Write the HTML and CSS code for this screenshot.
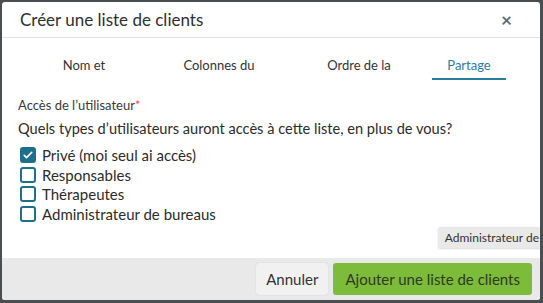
FILE: index.html
```html
<!DOCTYPE html>
<html lang="fr">
<head>
  <meta charset="UTF-8">
  <title>Créer une liste de clients</title>
  <link rel="stylesheet" href="styles.css">
</head>
<body>
  <div class="modal">
    <div class="modal-header">
      <h2>Créer une liste de clients</h2>
      <span class="close">&times;</span>
    </div>

    <div class="tabs">
      <div class="tab">Nom et</div>
      <div class="tab">Colonnes du</div>
      <div class="tab">Ordre de la</div>
      <div class="tab active">Partage</div>
    </div>

    <div class="modal-body">
      <p class="label">Accès de l’utilisateur<span class="req">*</span></p>
      <p class="question">Quels types d’utilisateurs auront accès à cette liste, en plus de vous?</p>

      <div class="options">
        <label class="option"><span class="box checked">
          <svg viewBox="0 0 16 16" width="12" height="12"><path d="M3 8.5l3 3 7-7" fill="none" stroke="#fff" stroke-width="2.2" stroke-linecap="round" stroke-linejoin="round"/></svg>
        </span>Privé (moi seul ai accès)</label>
        <label class="option"><span class="box"></span>Responsables</label>
        <label class="option"><span class="box"></span>Thérapeutes</label>
        <label class="option"><span class="box"></span>Administrateur de bureaus</label>
      </div>

      <!-- infobulle du survol -->
      <div class="tooltip">Administrateur de</div>
    </div>

    <div class="modal-footer">
      <button class="btn btn-cancel">Annuler</button>
      <button class="btn btn-primary">Ajouter une liste de clients</button>
    </div>
  </div>
</body>
</html>
```

FILE: styles.css
```css
html, body {
  height: 100%;
  margin: 0;
  overflow: hidden;
}

body {
  background: #4b4e51;
  font-family: Lato, 'Noto Sans', sans-serif;
  color: #333;
  padding: 2px 3px 3px 2px;
  box-sizing: border-box;
}

.modal {
  background: #fff;
  border-radius: 3px;
  height: 298px;
  display: flex;
  flex-direction: column;
  overflow: hidden;
}

.modal-header {
  display: flex;
  align-items: center;
  justify-content: space-between;
  height: 35px;
  padding: 0 28px 0 18px;
  border-bottom: 1px solid #e1e1e1;
}

.modal-header h2 {
  margin: 0;
  font-size: 17px;
  font-weight: 400;
  color: #2f2f2f;
}

.close {
  font-size: 19px;
  color: #5b6a75;
  font-weight: 700;
  line-height: 1;
}

.tabs {
  display: flex;
  height: 42px;
}

.tab {
  text-align: center;
  font-size: 13px;
  color: #333;
  padding-top: 19px;
}

.tab:nth-child(1) { flex: 0 0 164px; }
.tab:nth-child(2) { flex: 0 0 106px; }
.tab:nth-child(3) { flex: 0 0 146px; margin-left: 14px; }

.tab.active {
  flex: 0 0 74px;
  color: #2a7d9c;
  border-bottom: 2px solid #2a7d9c;
  box-sizing: border-box;
}

.modal-body {
  position: relative;
  flex: 1;
  padding: 17px 16px 0 16px;
}

.label {
  margin: 0;
  font-size: 13px;
  color: #3a3a3a;
}

.req {
  color: #d9534f;
}

.question {
  margin: 7px 0 10px;
  font-size: 14.6px;
  color: #2b2b2b;
}

.options {
  display: flex;
  flex-direction: column;
  gap: 4.3px;
}

.option {
  display: flex;
  align-items: center;
  gap: 6px;
  font-size: 15px;
  color: #2b2b2b;
  height: 15.5px;
  padding-left: 2px;
}

.box {
  width: 12px;
  height: 12px;
  border: 2px solid #1f6f8b;
  border-radius: 3px;
  display: flex;
  align-items: center;
  justify-content: center;
}

.box.checked {
  background: #1f6f8b;
}

.tooltip {
  position: absolute;
  right: -4px;
  bottom: 10px;
  background: #e9e9e9;
  color: #333;
  font-size: 12px;
  padding: 3px 5px 3px 7px;
  border-radius: 2px;
  box-shadow: 0 1px 2px rgba(0,0,0,0.15);
}

.modal-footer {
  background: #e9e9e9;
  height: 42px;
  display: flex;
  justify-content: flex-end;
  align-items: center;
  gap: 5px;
  padding: 0 8px;
}

.btn {
  font-family: inherit;
  font-size: 15px;
  border: none;
  border-radius: 3px;
  height: 32px;
  padding: 0 10px;
  color: #333;
}

.btn-cancel {
  background: #f1f1f1;
  box-shadow: 0 0 1px rgba(0,0,0,0.2);
}

.btn-primary {
  background: #7dbb3a;
  color: #2e3a22;
  padding: 0 12px;
}
```
